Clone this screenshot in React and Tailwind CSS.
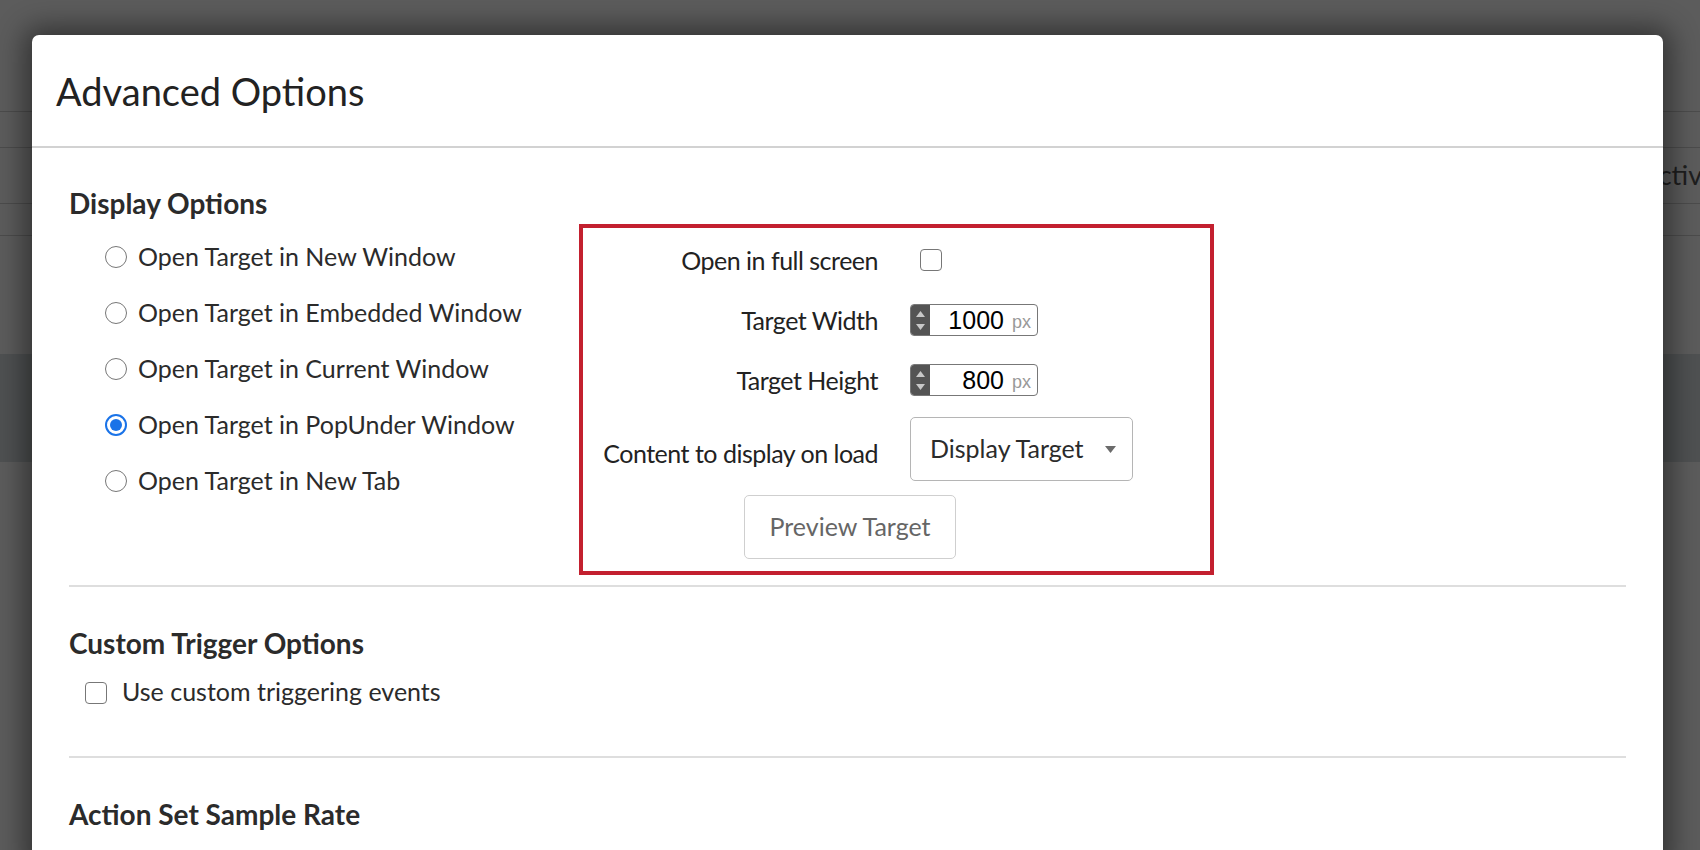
import React from "react";

const FONT = { fontFamily: "Lato, 'Open Sans', sans-serif" };

function Radio({ checked }) {
  return checked ? (
    <span className="w-[22px] h-[22px] rounded-full border-[2px] border-[#1a73e8] flex items-center justify-center shrink-0 bg-white">
      <span className="w-[12px] h-[12px] rounded-full bg-[#1a73e8]" />
    </span>
  ) : (
    <span className="w-[22px] h-[22px] rounded-full border-[1.5px] border-[#777] shrink-0 bg-white" />
  );
}

function Checkbox({ className = "" }) {
  return <span className={"w-[22px] h-[22px] rounded-[4px] border-[1.5px] border-[#777] bg-white shrink-0 " + className} />;
}

function NumberInput({ value }) {
  return (
    <div className="flex w-[128px] h-[32px] border border-[#777] rounded-[4px] overflow-hidden bg-white">
      <div className="w-[19px] bg-[#545454] flex flex-col items-center justify-center gap-[7px]">
        <svg width="9" height="6" viewBox="0 0 9 6"><path d="M0 6 L4.5 0 L9 6 Z" fill="#c8c8c8" /></svg>
        <svg width="9" height="6" viewBox="0 0 9 6"><path d="M0 0 L4.5 6 L9 0 Z" fill="#c8c8c8" /></svg>
      </div>
      <div className="flex-1 flex items-center justify-end pr-[6px] gap-[8px]">
        <span className="text-[25px] text-black leading-none" style={{ fontFamily: "'Liberation Sans', Arial, sans-serif" }}>{value}</span>
        <span className="text-[18px] text-[#999] leading-none mt-[4px]" style={{ fontFamily: "'Liberation Sans', Arial, sans-serif" }}>px</span>
      </div>
    </div>
  );
}

const LABEL = "w-[295px] text-right text-[25px] text-[#222] tracking-[-0.5px] leading-none";

export default function App() {
  const radios = [
    "Open Target in New Window",
    "Open Target in Embedded Window",
    "Open Target in Current Window",
    "Open Target in PopUnder Window",
    "Open Target in New Tab",
  ];
  return (
    <div className="w-[1700px] h-[850px] overflow-hidden relative bg-[#5c5c5c]" style={FONT}>
      {/* page behind overlay */}
      <div className="flex flex-col">
        <div className="h-[112px] border-b border-[#4c4c4c]" />
        <div className="h-[36px] border-b border-[#4c4c4c]" />
        <div className="h-[56px] border-b border-[#4c4c4c] flex justify-end items-center">
          <span className="text-[27px] text-[#1e1e1e] mr-[-16px]">ctive</span>
        </div>
        <div className="h-[32px] border-b border-[#4c4c4c]" />
        <div className="h-[118px]" />
        <div className="h-[108px] bg-[#4f5152]" />
      </div>

      {/* modal */}
      <div className="absolute left-[32px] top-[35px] w-[1631px] h-[830px] bg-white rounded-t-[7px] shadow-[0_0_28px_8px_rgba(0,0,0,0.45)] flex flex-col">
        <div className="h-[113px] shrink-0 border-b-2 border-[#d2d2d2] flex items-center pl-[24px]">
          <h1 className="text-[38px] text-[#222] font-normal leading-none">Advanced Options</h1>
        </div>

        <div className="px-[37px]">
          {/* Display Options */}
          <div className="pt-[40px] flex">
            <div className="w-[510px] shrink-0">
              <h2 className="text-[28px] font-bold text-[#2b2b2b] leading-[30px]">Display Options</h2>
              <div className="mt-[11px] flex flex-col pl-[36px]">
                {radios.map((r, i) => (
                  <div key={r} className="h-[56px] flex items-center gap-[11px]">
                    <Radio checked={i === 3} />
                    <span className="text-[25px] text-[#2b2b2b]">{r}</span>
                  </div>
                ))}
              </div>
            </div>

            <div className="mt-[36px] w-[635px] h-[351px] border-[4px] border-[#c3202f] pt-[10px] flex flex-col">
              <div className="h-[44px] flex items-center gap-[32px]">
                <span className={LABEL}>Open in full screen</span>
                <Checkbox className="ml-[10px]" />
              </div>
              <div className="mt-[16px] h-[44px] flex items-center gap-[32px]">
                <span className={LABEL}>Target Width</span>
                <NumberInput value="1000" />
              </div>
              <div className="mt-[16px] h-[44px] flex items-center gap-[32px]">
                <span className={LABEL}>Target Height</span>
                <NumberInput value="800" />
              </div>
              <div className="mt-[15px] h-[64px] flex items-center gap-[32px]">
                <span className={LABEL + " mt-[8px]"}>Content to display on load</span>
                <div className="w-[223px] h-[64px] border border-[#b5b5b5] rounded-[5px] flex items-center justify-between pl-[19px] pr-[16px]">
                  <span className="text-[25px] text-[#2b2b2b]">Display Target</span>
                  <svg width="11" height="7" viewBox="0 0 11 7"><path d="M0 0 L11 0 L5.5 7 Z" fill="#6b6b6b" /></svg>
                </div>
              </div>
              <div className="mt-[14px] ml-[161px] w-[212px] h-[64px] border border-[#cfcfcf] rounded-[5px] flex items-center justify-center">
                <span className="text-[25px] text-[#666]">Preview Target</span>
              </div>
            </div>
          </div>

          <div className="mt-[10px] h-[2px] bg-[#dedede]" />

          {/* Custom Trigger Options */}
          <div className="pt-[41px] pb-[49px]">
            <h2 className="text-[28px] font-bold text-[#2b2b2b] leading-[30px]">Custom Trigger Options</h2>
            <div className="mt-[19px] h-[30px] flex items-center gap-[15px] pl-[16px]">
              <Checkbox className="mt-[2px]" />
              <span className="text-[25px] text-[#2b2b2b]">Use custom triggering events</span>
            </div>
          </div>

          <div className="h-[2px] bg-[#dedede]" />

          <div className="pt-[41px]">
            <h2 className="text-[28px] font-bold text-[#2b2b2b] leading-[30px]">Action Set Sample Rate</h2>
          </div>
        </div>
      </div>
    </div>
  );
}
